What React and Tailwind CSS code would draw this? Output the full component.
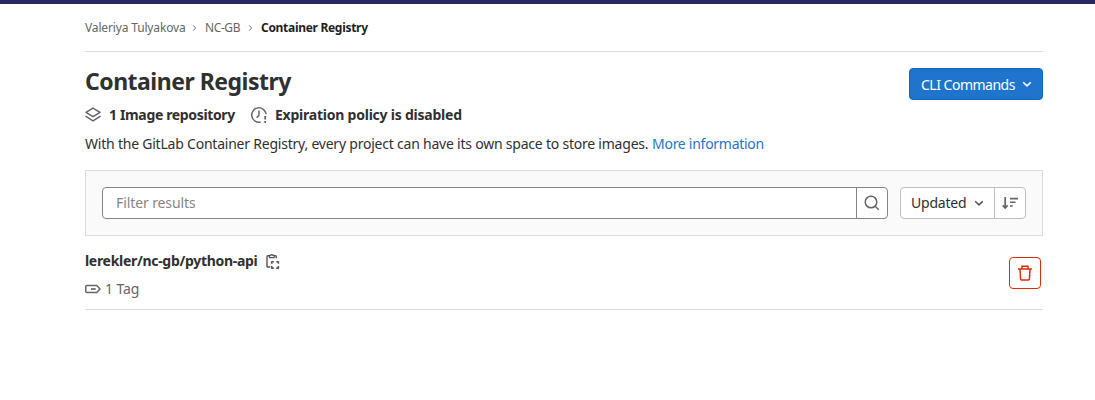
function Icon({ children, className = "", size = 16 }) {
  return (
    <svg
      width={size}
      height={size}
      viewBox="0 0 16 16"
      fill="none"
      stroke="currentColor"
      strokeWidth="1.5"
      className={`shrink-0 ${className}`}
      aria-hidden="true"
    >
      {children}
    </svg>
  );
}

function Layers() {
  return (
    <Icon className="text-[#666666]">
      <path d="M8 1.1 15 5.4 8 9.7 1 5.4Z" strokeLinejoin="round" />
      <path d="M.5 9.2 8 13.8l7.5-4.6" />
    </Icon>
  );
}

function Expire() {
  return (
    <Icon className="text-[#666666]">
      <path d="M15.1 7.2A7.2 7.2 0 1 0 9.6 15" />
      <path d="M8 4v4.2l-2 2" strokeLinecap="round" />
      <path d="M14.2 9v3.6M14.2 14v2" strokeWidth="1.8" />
    </Icon>
  );
}

function Chevron({ className }) {
  return (
    <Icon className={className}>
      <path d="m4.7 6.7 3.3 3.2 3.3-3.2" strokeWidth="1.6" strokeLinecap="round" strokeLinejoin="round" />
    </Icon>
  );
}

function Search() {
  return (
    <Icon className="text-[#666666]">
      <circle cx="7" cy="7" r="5.8" />
      <path d="m11.2 11.2 3.6 3.6" />
    </Icon>
  );
}

function SortDescending() {
  return (
    <Icon className="text-[#666666]">
      <path d="M3.2 2v11M.7 10.4l2.5 2.7 2.5-2.7" strokeWidth="1.7" />
      <path d="M8 3.6h8M8 7.3h5.5M8 11h2.8" strokeWidth="1.6" />
    </Icon>
  );
}

function Clipboard() {
  return (
    <Icon className="text-[#555555]">
      <path d="M4.6 2.8H2.8a.8.8 0 0 0-.8.8v9.6a.8.8 0 0 0 .8.8h2.4M9.2 2.8h1.3a.8.8 0 0 1 .8.8v1.7" strokeWidth="1.4" />
      <path d="M4.6 4.6V2.4h1.2a1.1 1.1 0 0 1 2.1 0h1.3v2.2Z" strokeWidth="1.2" />
      <path d="M6.7 10.8V8.7h2.1M11.3 8.7h2.1v2.1M13.4 13v2.1h-2.1M8.8 15.1H6.7V13" strokeWidth="1.6" strokeLinejoin="round" />
    </Icon>
  );
}

function Tag() {
  return (
    <Icon className="text-[#666666]">
      <path d="M1.8 4.5h10L15 8l-3.2 3.5h-10a1 1 0 0 1-1-1v-5a1 1 0 0 1 1-1Z" strokeLinejoin="round" />
      <path d="M6 8h4.7" strokeWidth="1.7" />
    </Icon>
  );
}

function Trash() {
  return (
    <Icon>
      <path d="M1 4.1h14M5 3.9V1.2h6v2.7M3 4.3l.6 9.6a1.2 1.2 0 0 0 1.2 1.2h6.4a1.2 1.2 0 0 0 1.2-1.2l.6-9.6" />
    </Icon>
  );
}

function Separator() {
  return (
    <svg width="5" height="8" viewBox="0 0 5 8" fill="none" stroke="#777777" aria-hidden="true">
      <path d="m1 1.2 2.7 2.8L1 6.8" />
    </svg>
  );
}

export default function App() {
  return (
    <div className="h-[400px] overflow-hidden bg-white font-['Noto_Sans',sans-serif] text-sm text-[#303030]">
      <div className="h-1 bg-[#292961]" />
      <main className="ml-[85px] w-[958px]">
        <nav className="flex h-12 items-center border-b border-[#dbdbdb] text-xs whitespace-nowrap text-[#666666]">
          <span className="w-[107px] tracking-[-0.15px]">Valeriya Tulyakova</span>
          <Separator />
          <span className="ml-2 w-[43px] tracking-[-0.4px]">NC-GB</span>
          <Separator />
          <span className="ml-2 font-bold tracking-[-0.3px] text-[#1f1f1f]">Container Registry</span>
        </nav>

        <header className="flex h-[50px] items-start justify-between pt-4">
          <h1 className="text-[23px] leading-[27px] font-bold tracking-[-0.5px] whitespace-nowrap">
            Container Registry
          </h1>
          <button className="flex h-8 w-[134px] items-center rounded border border-[#1068bf] bg-[#1f75cb] pl-[11px] text-left whitespace-nowrap text-white">
            <span className="w-[98px] pt-px tracking-[-0.5px]">CLI Commands</span>
            <Chevron />
          </button>
        </header>

        <div className="flex h-[26px] items-center font-bold whitespace-nowrap">
          <Layers />
          <span className="ml-2 w-[142px] tracking-[-0.35px]">1 Image repository</span>
          <Expire />
          <span className="ml-2 tracking-[-0.23px]">Expiration policy is disabled</span>
        </div>
        <p className="flex h-[32px] items-center whitespace-nowrap">
          <span className="w-[567px] tracking-[-0.22px]">
            With the GitLab Container Registry, every project can have its own space to store images.
          </span>
          <a className="tracking-[-0.27px] text-[#1f75cb]">More information</a>
        </p>

        <section className="mt-[10px] flex h-[66px] items-center border border-[#dbdbdb] bg-[#fafafa] pl-4">
          <div className="flex h-8 w-[786px] rounded border border-[#868686] bg-white">
            <div className="flex flex-1 items-center pl-[13px] tracking-[-0.1px] text-[#868686]">Filter results</div>
            <button className="flex w-[31px] items-center justify-center border-l border-[#868686]">
              <Search />
            </button>
          </div>
          <div className="ml-3 flex h-8 w-[126px] rounded border border-[#bfbfbf] bg-white">
            <button className="flex flex-1 items-center pl-[10px] text-left">
              <span className="w-[60px] tracking-[-0.2px]">Updated</span>
              <Chevron className="text-[#555555]" />
            </button>
            <button className="flex w-[31px] items-center justify-center border-l border-[#bfbfbf]">
              <SortDescending />
            </button>
          </div>
        </section>

        <article className="flex h-[74px] items-center justify-between border-b border-[#dbdbdb] pr-[2px] whitespace-nowrap">
          <div className="pt-1">
            <div className="flex h-7 items-center font-bold">
              <span className="w-[180px] tracking-[-0.3px]">lerekler/nc-gb/python-api</span>
              <Clipboard />
            </div>
            <div className="flex h-7 items-center text-[#666666]">
              <Tag />
              <span className="ml-1 tracking-[-0.1px]">1 Tag</span>
            </div>
          </div>
          <button className="flex size-8 items-center justify-center rounded border border-[#dd2b0e] text-[#dd2b0e]">
            <Trash />
          </button>
        </article>
      </main>
    </div>
  );
}
